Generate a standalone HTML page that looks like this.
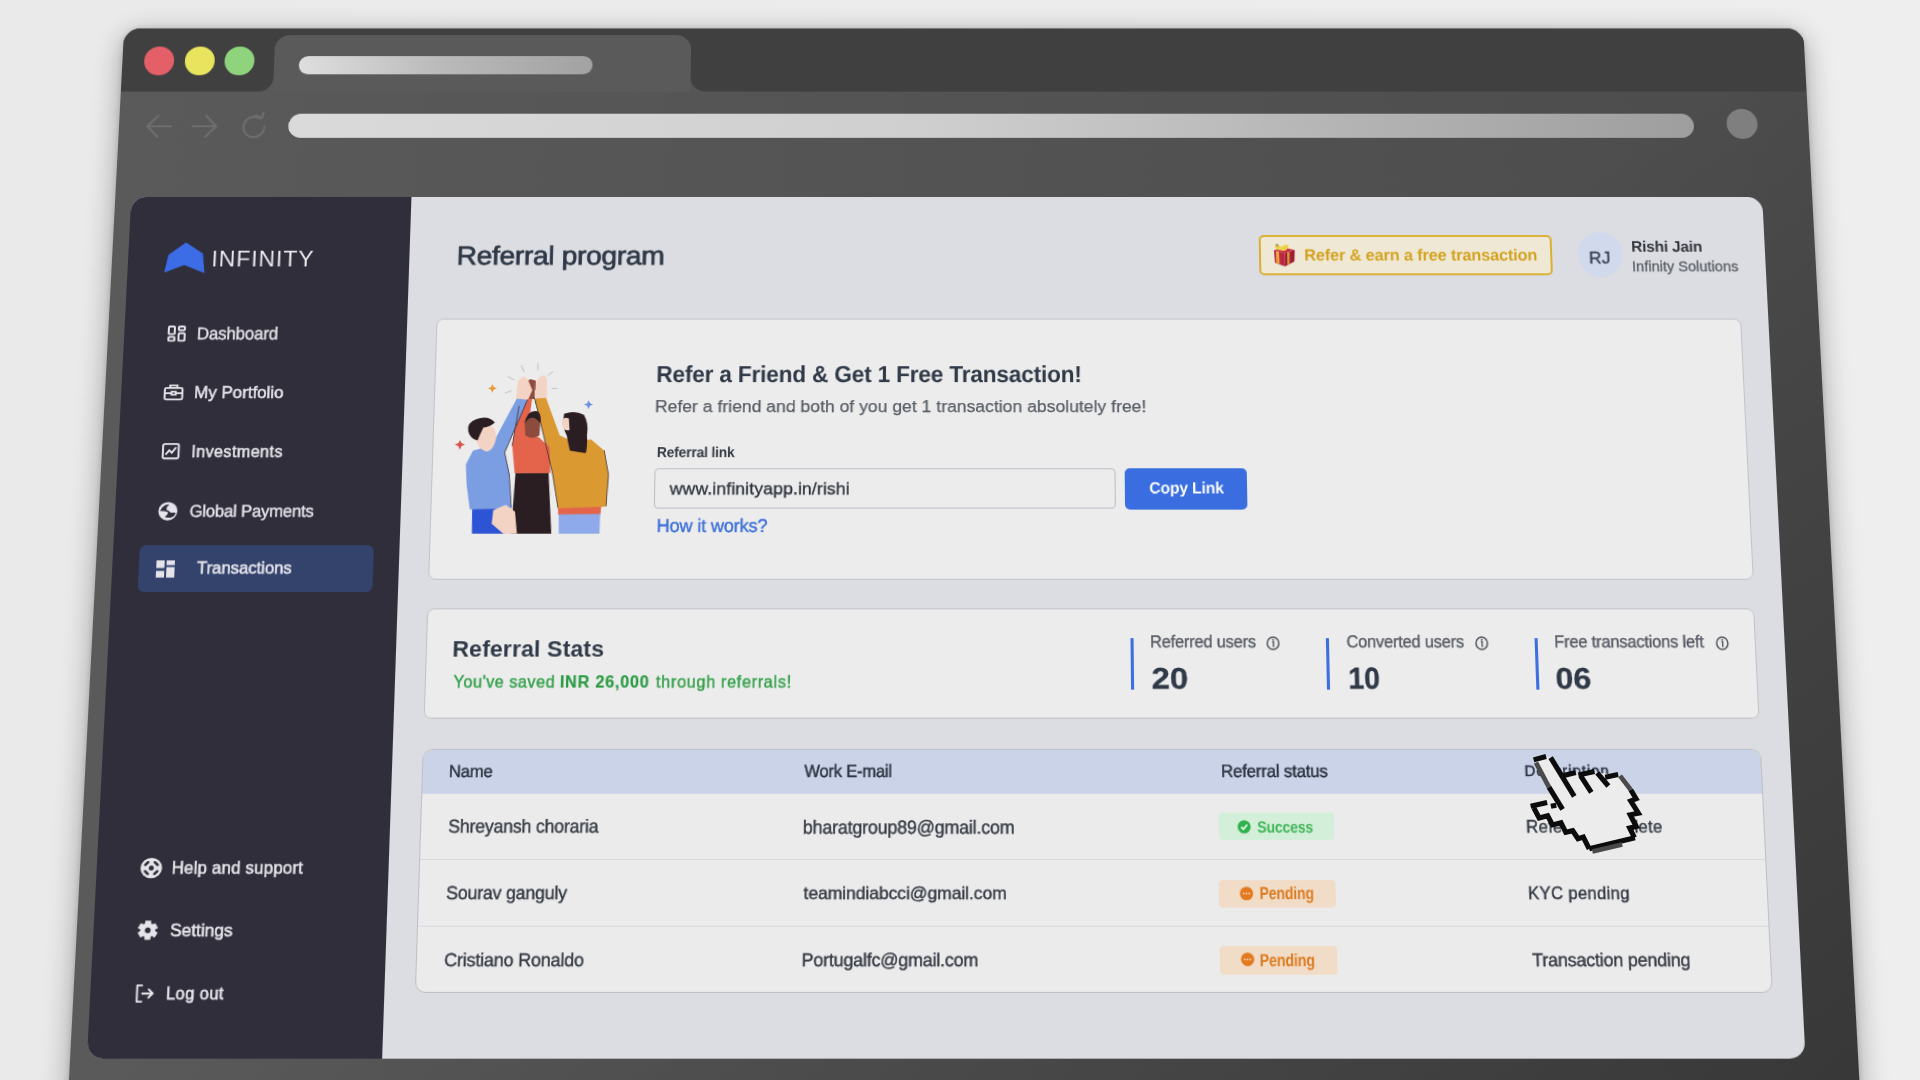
<!DOCTYPE html>
<html><head><meta charset="utf-8"><style>
html,body{margin:0;padding:0;width:1920px;height:1080px;overflow:hidden;background:#ebebeb;}
body{font-family:"Liberation Sans",sans-serif;position:relative;}
.t{position:absolute;white-space:nowrap;line-height:1;}
#plane{position:absolute;left:0;top:0;width:1900px;height:1200px;transform-origin:0 0;transform:matrix3d(0.9885413909,1.956405031e-12,0,-1.376688693e-14,-0.05743843265,0.9499752457,0,-6.00206411e-05,0,0,1,0,42.3574054,4.640137586,0,1);}
</style></head><body>
<div style="position:absolute;inset:0;background:linear-gradient(to right,#eaeaea,#eeeeee)"></div>
<div id="plane">
<div style="position:absolute;left:84.000px;top:25.000px;width:1696.000px;height:1080.000px;border-radius:17.000px 17.000px 0 0;background:linear-gradient(to right,#5a5a5a,#4c4c4c);box-shadow:0 6.000px 28.000px rgba(0,0,0,0.32), 0 0 6.000px rgba(0,0,0,0.15);overflow:hidden"><div style="position:absolute;inset:0;background:linear-gradient(to bottom right,transparent 50%,rgba(0,0,0,0.28) 100%)"></div></div>
<div style="position:absolute;left:84.000px;top:25.000px;width:1696.000px;height:20.000px;background:#404040;border-radius:17.000px 17.000px 0 0"></div>
<div style="position:absolute;left:84.000px;top:25.000px;width:153.000px;height:65.500px;background:#404040;border-radius:17.000px 0 15.000px 0"></div>
<div style="position:absolute;left:657.000px;top:25.000px;width:1123.000px;height:65.500px;background:#404040;border-radius:0 17.000px 0 15.000px"></div>
<div style="position:absolute;left:236.700px;top:32.000px;width:420.700px;height:59.000px;background:#5a5a5a;border-radius:15.000px 15.000px 0 0"></div>
<div style="position:absolute;left:106.000px;top:44.100px;width:30.000px;height:29.600px;background:#e45f67;border-radius:50%"></div>
<div style="position:absolute;left:146.500px;top:44.100px;width:30.000px;height:29.600px;background:#e9e45d;border-radius:50%"></div>
<div style="position:absolute;left:186.800px;top:44.100px;width:30.000px;height:29.600px;background:#8fd47d;border-radius:50%"></div>
<div style="position:absolute;left:262.000px;top:53.600px;width:296.000px;height:19.000px;border-radius:10.000px;background:linear-gradient(to right,#dedede,#b9b9b9 50%,#a2a2a2)"></div>
<div style="position:absolute;left:254.100px;top:113.800px;width:1410.500px;height:25.000px;border-radius:13.000px;background:linear-gradient(to right,#dadada,#cfcfcf 45%,#9e9e9e)"></div>
<div style="position:absolute;left:1698.000px;top:109.100px;width:31.000px;height:31.000px;background:#7f7f7f;border-radius:50%"></div>
<div style="position:absolute;left:108.000px;top:112.000px;width:130.000px;height:30.000px;"><svg viewBox="0 0 130 30" style="position:absolute;left:0;top:0;width:130.000px;height:30.000px" fill="none" stroke="#6e6e6e" stroke-width="2.2" stroke-linecap="round" stroke-linejoin="round"><path d="M5 15 H28 M15 4 L4.5 15 L15 26"/><path d="M50 15 H73 M63 4 L73.5 15 L63 26"/><path d="M122 15.5 A10.5 10.5 0 1 1 117 6.8 M113 4 L119 6.5 L120.5 1"/></svg></div>
<div style="position:absolute;left:100.000px;top:200.000px;width:1630.000px;height:840.000px;background:#dcdde2;border-radius:15.000px"></div>
<div style="position:absolute;left:100.000px;top:200.000px;width:280.000px;height:840.000px;background:#2f2e3a;border-radius:15.000px 0 0 15.000px"></div>
<svg style="position:absolute;left:135.120px;top:246.500px;width:41.580px;height:30.890px;overflow:visible;" viewBox="0 0 40 30" preserveAspectRatio="none"><path d="M21.2 0.3 L37.2 11 L39.4 29 L20.4 21.2 L2.2 28.7 L5.4 12.1 Z" fill="#3c6ce6" stroke="#3c6ce6" stroke-width="1.2" stroke-linejoin="round"/></svg>
<div style="position:absolute;left:126.080px;top:550.470px;width:228.740px;height:45.430px;background:#34436c;border-radius:6.000px"></div>
<svg style="position:absolute;left:142.840px;top:330.750px;width:17.920px;height:16.360px;overflow:visible;" viewBox="0 0 18 17" preserveAspectRatio="none"><g fill="none" stroke="#e4e4ea" stroke-width="2"><rect x="1" y="1" width="6" height="8" rx="1"/><rect x="11" y="1" width="6" height="4" rx="1"/><rect x="1" y="12" width="6" height="4" rx="1"/><rect x="11" y="8" width="6" height="8" rx="1"/></g></svg>
<svg style="position:absolute;left:142.040px;top:390.180px;width:19.440px;height:16.340px;overflow:visible;" viewBox="0 0 19 17" preserveAspectRatio="none"><g fill="none" stroke="#e4e4ea" stroke-width="1.9"><rect x="1" y="4" width="17" height="12" rx="1.5"/><path d="M6 4 V1.5 H13 V4"/><path d="M1 9.5 H18"/><rect x="7.5" y="8" width="4" height="3" fill="#2f2e3a"/></g></svg>
<svg style="position:absolute;left:143.290px;top:448.980px;width:17.500px;height:16.230px;overflow:visible;" viewBox="0 0 17 17" preserveAspectRatio="none"><g fill="none" stroke="#e4e4ea" stroke-width="1.9"><rect x="1" y="1" width="15" height="15" rx="1.5"/><path d="M3.5 12 L7 7.5 L9.5 10 L13.5 4.5"/></g></svg>
<svg style="position:absolute;left:142.050px;top:506.570px;width:19.440px;height:19.070px;overflow:visible;" viewBox="0 0 20 20" preserveAspectRatio="none"><circle cx="10" cy="10" r="9.6" fill="#e4e4ea"/><clipPath id="gc"><circle cx="10" cy="10" r="8.3"/></clipPath><path clip-path="url(#gc)" fill="#2f2e3a" d="M1 9.4 L2.4 9.2 L4.4 5.8 L7.6 3.5 L11.2 2.9 L8.8 5.8 L8.4 8.5 L11.2 10 L12.8 11.5 L16 11.5 L19 11.9 L16 15.4 L12.8 16.9 L8 16.5 L7.6 15.4 L9.6 13.5 L10.4 11.5 L8.8 10.4 L6.4 10 L1 9.8 Z"/></svg>
<svg style="position:absolute;left:143.110px;top:564.820px;width:18.000px;height:16.880px;overflow:visible;" viewBox="0 0 18 18" preserveAspectRatio="none"><g fill="#e4e4ea"><rect x="0" y="0" width="8" height="8"/><rect x="10" y="0" width="8" height="5"/><rect x="0" y="11" width="8" height="7"/><rect x="10" y="7" width="8" height="11"/></g></svg>
<svg style="position:absolute;left:142.070px;top:851.540px;width:20.710px;height:19.310px;overflow:visible;" viewBox="0 0 20 20" preserveAspectRatio="none"><circle cx="10" cy="10" r="10" fill="#e4e4ea"/><circle cx="10" cy="10" r="2.4" fill="#2f2e3a"/><g stroke="#2f2e3a" stroke-width="2.4" stroke-linecap="round"><path d="M4.3 6.9 L6.9 4.3 M13.1 4.3 L15.7 6.9 M4.3 13.1 L6.9 15.7 M15.7 13.1 L13.1 15.7"/></g></svg>
<svg style="position:absolute;left:142.340px;top:911.010px;width:19.740px;height:18.600px;overflow:visible;" viewBox="0 0 20 20" preserveAspectRatio="none"><path fill="#e4e4ea" fill-rule="evenodd" stroke="#e4e4ea" stroke-width="0.6" stroke-linejoin="round" d="M7.15 3.61 L7.49 0.63 L12.51 0.63 L12.85 3.61 L14.11 4.34 L16.86 3.14 L19.37 7.49 L16.96 9.27 L16.96 10.73 L19.37 12.51 L16.86 16.86 L14.11 15.66 L12.85 16.39 L12.51 19.37 L7.49 19.37 L7.15 16.39 L5.89 15.66 L3.14 16.86 L0.63 12.51 L3.04 10.73 L3.04 9.27 L0.63 7.49 L3.14 3.14 L5.89 4.34 Z M13.1 10 A3.1 3.1 0 1 0 6.9 10 A3.1 3.1 0 1 0 13.1 10 Z"/></svg>
<svg style="position:absolute;left:142.820px;top:970.590px;width:17.980px;height:16.970px;overflow:visible;" viewBox="0 0 18 18" preserveAspectRatio="none"><g fill="none" stroke="#e4e4ea" stroke-width="1.9" stroke-linecap="round" stroke-linejoin="round"><path d="M6 1 H1.5 V17 H6"/><path d="M6.5 9 H16.5 M12.5 5 L16.5 9 L12.5 13"/></g></svg>
<div style="position:absolute;left:1226.160px;top:239.040px;width:292.150px;height:41.200px;box-sizing:border-box;background:#efe8d5;border:2.000px solid #d8b035;border-radius:5.000px"></div>
<svg style="position:absolute;left:1232.290px;top:242.010px;width:39.140px;height:34.670px;overflow:visible;" viewBox="0 0 1271 1080" preserveAspectRatio="none"><path d="M290 390 L640 480 L640 900 L320 790 Z" fill="#bb2742"/><path d="M640 480 L965 385 L945 745 L640 900 Z" fill="#9d1d35"/><path d="M290 390 L600 300 L965 385 L640 480 Z" fill="#c8304a"/><path d="M350 410 L455 440 L470 835 L365 795 Z" fill="#eaa23c"/><path d="M715 460 L800 435 L790 820 L715 865 Z" fill="#d8952f"/><path d="M330 230 Q420 170 540 290 Q640 170 770 230 Q760 330 690 380 Q600 420 540 400 Q420 400 360 330 Q320 280 330 230 Z" fill="#ecd244"/><path d="M340 200 L420 180 L450 260 L360 270 Z" fill="#a8a060"/></svg>
<div style="position:absolute;left:1543.740px;top:236.280px;width:44.010px;height:46.100px;background:#d1d9ec;border-radius:50%"></div>
<div style="position:absolute;left:409.000px;top:324.000px;width:1293.500px;height:259.500px;box-sizing:border-box;background:#ececec;border:1.600px solid #c2c3c8;border-radius:7.000px"></div>
<svg style="position:absolute;left:423.470px;top:360.720px;width:172.020px;height:184.240px;overflow:visible;" viewBox="0 0 992 1080" preserveAspectRatio="none">
<g stroke="#c9c9c9" stroke-width="7" stroke-linecap="round" fill="none">
<path d="M338 128 L372 145"/><path d="M412 62 L428 96"/><path d="M505 48 L508 86"/><path d="M590 98 L565 118"/><path d="M325 222 L356 210"/><path d="M590 196 L618 196"/>
</g>
<path d="M250 170 L258 188 L276 195 L258 202 L250 222 L242 202 L224 195 L242 188 Z" fill="#e89a3a"/>
<path d="M800 265 L808 283 L826 290 L808 297 L800 317 L792 297 L774 290 L792 283 Z" fill="#6a8de0"/>
<path d="M75 498 L84 516 L104 525 L84 534 L75 555 L66 534 L46 525 L66 516 Z" fill="#d9534a"/>
<path d="M645 920 L880 920 L878 1042 L648 1042 Z" fill="#8eaaea"/>
<path d="M640 875 L885 870 L882 928 L642 930 Z" fill="#e3644b"/>
<path d="M492 250 L552 238 L640 470 L700 500 L820 495 L895 560 L922 700 L912 885 L640 895 L606 700 L572 560 Z" fill="#db9932"/>
<path d="M662 345 Q720 320 775 350 Q805 400 795 470 Q800 540 790 575 L700 560 Q690 520 680 470 Q650 420 662 345 Z" fill="#2b1e22"/>
<path d="M650 380 Q668 360 690 372 L695 440 Q670 445 655 425 Z" fill="#f3d3c3"/>
<path d="M492 255 L500 150 L520 128 L545 118 L560 140 L562 250 Z" fill="#f3d3c3"/>
<path d="M395 690 L582 688 L606 1042 L378 1042 Z" fill="#2b1e22"/>
<path d="M372 530 L415 250 L478 252 L455 470 L520 480 L585 540 L592 690 L390 692 Z" fill="#e3644b"/>
<path d="M438 390 Q485 320 528 390 L525 470 Q485 500 445 470 Z" fill="#8d4b3d"/>
<path d="M440 400 Q450 320 510 330 Q535 345 530 400 Q500 360 470 370 Q450 380 440 400 Z" fill="#2b1e22"/>
<path d="M425 255 L430 165 L465 140 L495 150 L492 258 Z" fill="#8d4b3d"/>
<path d="M155 890 L345 890 L342 1042 L158 1042 Z" fill="#2d54d4"/>
<path d="M150 560 L255 530 L398 240 L452 262 L330 570 L360 700 L376 895 L142 902 L120 760 L112 640 Z" fill="#7b9ee3"/>
<path d="M160 470 Q150 410 215 400 Q275 410 280 480 Q270 560 225 565 Q170 550 160 470 Z" fill="#f3d3c3"/>
<path d="M120 445 Q110 395 165 375 Q230 350 270 395 Q240 420 205 425 Q185 470 175 500 Q130 490 120 445 Z" fill="#2b1e22"/>
<path d="M385 255 L395 150 L425 125 L450 140 L478 205 L455 262 Z" fill="#f3d3c3"/>
<path d="M275 905 L345 875 L398 915 L412 1042 L335 1042 L268 985 Z" fill="#f3d3c3"/>
<g fill="none" stroke="#3a2a2c" stroke-width="5" stroke-linecap="round" opacity="0.85">
<path d="M452 262 L330 570 L360 700 L376 890"/>
<path d="M372 530 L405 300"/>
<path d="M492 250 L572 560 L606 700 L640 890"/>
<path d="M895 560 L922 700 L912 880"/>
</g>
</svg>
<div style="position:absolute;left:627.850px;top:474.150px;width:452.690px;height:39.730px;box-sizing:border-box;background:#ececec;border:1.500px solid #b9bdc6;border-radius:4.000px"></div>
<div style="position:absolute;left:1089.870px;top:473.650px;width:119.770px;height:41.120px;background:#3a6ee0;border-radius:5.000px"></div>
<div style="position:absolute;left:409.000px;top:612.400px;width:1293.000px;height:107.000px;box-sizing:border-box;background:#ececec;border:1.600px solid #c2c3c8;border-radius:7.000px"></div>
<div style="position:absolute;left:1094.000px;top:640.680px;width:2.800px;height:50.730px;background:#3d6fe0"></div>
<div style="position:absolute;left:1284.000px;top:640.680px;width:2.800px;height:50.730px;background:#3d6fe0"></div>
<div style="position:absolute;left:1487.000px;top:640.680px;width:2.800px;height:50.730px;background:#3d6fe0"></div>
<svg style="position:absolute;left:1226.230px;top:638.740px;width:13.150px;height:14.000px;overflow:visible;" viewBox="0 0 14 14" preserveAspectRatio="none"><circle cx="7" cy="7" r="6" fill="none" stroke="#55585e" stroke-width="1.6"/><path d="M6.2 5.6 H7.4 V10.8" fill="none" stroke="#55585e" stroke-width="1.5"/><circle cx="7.1" cy="3.7" r="0.9" fill="#55585e"/></svg>
<svg style="position:absolute;left:1429.160px;top:638.740px;width:12.970px;height:14.000px;overflow:visible;" viewBox="0 0 14 14" preserveAspectRatio="none"><circle cx="7" cy="7" r="6" fill="none" stroke="#55585e" stroke-width="1.6"/><path d="M6.2 5.6 H7.4 V10.8" fill="none" stroke="#55585e" stroke-width="1.5"/><circle cx="7.1" cy="3.7" r="0.9" fill="#55585e"/></svg>
<svg style="position:absolute;left:1663.310px;top:638.740px;width:12.770px;height:14.000px;overflow:visible;" viewBox="0 0 14 14" preserveAspectRatio="none"><circle cx="7" cy="7" r="6" fill="none" stroke="#55585e" stroke-width="1.6"/><path d="M6.2 5.6 H7.4 V10.8" fill="none" stroke="#55585e" stroke-width="1.5"/><circle cx="7.1" cy="3.7" r="0.9" fill="#55585e"/></svg>
<div style="position:absolute;left:409.000px;top:747.800px;width:1293.000px;height:230.900px;box-sizing:border-box;background:#ebebeb;border:1.600px solid #bfc0c6;border-radius:10.000px;overflow:hidden"><div style="position:absolute;left:0;top:0;right:0;height:41.800px;background:#cbd3e8"></div><div style="position:absolute;left:0;top:104.500px;right:0;height:1.200px;background:#d8d9dd"></div><div style="position:absolute;left:0;top:167.000px;right:0;height:1.200px;background:#d8d9dd"></div></div>
<div style="position:absolute;left:1176.550px;top:808.880px;width:111.920px;height:25.870px;background:#d3eed9;border-radius:4.000px"></div>
<div style="position:absolute;left:1176.110px;top:872.540px;width:111.740px;height:26.510px;background:#f1dcc7;border-radius:4.000px"></div>
<div style="position:absolute;left:1175.970px;top:935.330px;width:112.430px;height:26.580px;background:#f1dcc7;border-radius:4.000px"></div>
<svg style="position:absolute;left:1195.290px;top:816.020px;width:12.850px;height:13.030px;overflow:visible;" viewBox="0 0 14 14" preserveAspectRatio="none"><circle cx="7" cy="7" r="6.8" fill="#2fb14c"/><path d="M3.8 7.2 L6.1 9.4 L10.2 4.9" fill="none" stroke="#eafff0" stroke-width="1.8"/></svg>
<svg style="position:absolute;left:1196.240px;top:878.590px;width:13.080px;height:13.210px;overflow:visible;" viewBox="0 0 14 14" preserveAspectRatio="none"><circle cx="7" cy="7" r="6.8" fill="#e27a20"/><g fill="#f7dcc0"><circle cx="4.2" cy="7" r="0.9"/><circle cx="7" cy="7" r="0.9"/><circle cx="9.8" cy="7" r="0.9"/></g></svg>
<svg style="position:absolute;left:1196.020px;top:941.320px;width:13.030px;height:13.100px;overflow:visible;" viewBox="0 0 14 14" preserveAspectRatio="none"><circle cx="7" cy="7" r="6.8" fill="#e27a20"/><g fill="#f7dcc0"><circle cx="4.2" cy="7" r="0.9"/><circle cx="7" cy="7" r="0.9"/><circle cx="9.8" cy="7" r="0.9"/></g></svg>
<div class="t" style="left:182.950px;top:250.000px;line-height:26.000px;font-size:23.130px;font-weight:400;color:#ebebf0;letter-spacing:0.900px;transform:scaleX(0.9894);transform-origin:0 0;">INFINITY</div>
<div class="t" style="left:171.610px;top:329.000px;line-height:20.000px;font-size:17.630px;font-weight:400;color:#e4e4ea;letter-spacing:-0.200px;transform:scaleX(0.9528);transform-origin:0 0;-webkit-text-stroke:0.500px #e4e4ea">Dashboard</div>
<div class="t" style="left:171.930px;top:389.000px;line-height:19.000px;font-size:16.760px;font-weight:400;color:#e4e4ea;letter-spacing:0.001px;-webkit-text-stroke:0.500px #e4e4ea">My Portfolio</div>
<div class="t" style="left:171.940px;top:449.000px;line-height:17.000px;font-size:15.910px;font-weight:400;color:#e4e4ea;letter-spacing:0.393px;-webkit-text-stroke:0.500px #e4e4ea">Investments</div>
<div class="t" style="left:172.900px;top:507.000px;line-height:19.000px;font-size:16.650px;font-weight:400;color:#e4e4ea;letter-spacing:-0.200px;transform:scaleX(0.9829);transform-origin:0 0;-webkit-text-stroke:0.500px #e4e4ea">Global Payments</div>
<div class="t" style="left:182.870px;top:563.000px;line-height:18.000px;font-size:16.380px;font-weight:400;color:#e4e4ea;letter-spacing:-0.038px;-webkit-text-stroke:0.500px #e4e4ea">Transactions</div>
<div class="t" style="left:171.890px;top:852.000px;line-height:18.000px;font-size:16.170px;font-weight:400;color:#e4e4ea;letter-spacing:0.195px;-webkit-text-stroke:0.500px #e4e4ea">Help and support</div>
<div class="t" style="left:173.190px;top:911.000px;line-height:19.000px;font-size:16.590px;font-weight:400;color:#e4e4ea;letter-spacing:-0.003px;-webkit-text-stroke:0.500px #e4e4ea">Settings</div>
<div class="t" style="left:172.180px;top:971.000px;line-height:17.000px;font-size:15.640px;font-weight:400;color:#e4e4ea;letter-spacing:0.433px;-webkit-text-stroke:0.500px #e4e4ea">Log out</div>
<div class="t" style="left:427.320px;top:245.000px;line-height:30.000px;font-size:26.410px;font-weight:400;color:#2f3947;letter-spacing:-0.300px;transform:scaleX(1.0621);transform-origin:0 0;-webkit-text-stroke:0.750px #2f3947">Referral program</div>
<div class="t" style="left:1270.750px;top:250.000px;line-height:19.000px;font-size:16.630px;font-weight:700;color:#d3a21e;letter-spacing:-0.200px;transform:scaleX(0.9846);transform-origin:0 0;">Refer &amp; earn a free transaction</div>
<div class="t" style="left:1554.550px;top:252.000px;line-height:20.000px;font-size:17.210px;font-weight:400;color:#3a4255;letter-spacing:0.192px;-webkit-text-stroke:0.400px #3a4255">RJ</div>
<div class="t" style="left:1597.430px;top:242.000px;line-height:17.000px;font-size:15.460px;font-weight:700;color:#30343c;letter-spacing:-0.200px;transform:scaleX(0.9951);transform-origin:0 0;">Rishi Jain</div>
<div class="t" style="left:1597.090px;top:263.000px;line-height:16.000px;font-size:14.530px;font-weight:400;color:#5c6068;letter-spacing:-0.002px;-webkit-text-stroke:0.300px #5c6068">Infinity Solutions</div>
<div class="t" style="left:627.780px;top:367.000px;line-height:26.000px;font-size:23.380px;font-weight:700;color:#2f3947;letter-spacing:-0.200px;transform:scaleX(0.9582);transform-origin:0 0;">Refer a Friend &amp; Get 1 Free Transaction!</div>
<div class="t" style="left:627.280px;top:402.000px;line-height:20.000px;font-size:17.310px;font-weight:400;color:#585d66;letter-spacing:0.017px;-webkit-text-stroke:0.250px #585d66">Refer a friend and both of you get 1 transaction absolutely free!</div>
<div class="t" style="left:630.220px;top:450.000px;line-height:16.000px;font-size:14.460px;font-weight:700;color:#343a44;letter-spacing:-0.200px;transform:scaleX(0.9437);transform-origin:0 0;">Referral link</div>
<div class="t" style="left:643.230px;top:484.000px;line-height:20.000px;font-size:17.360px;font-weight:400;color:#2c323c;letter-spacing:0.092px;-webkit-text-stroke:0.300px #2c323c">www.infinityapp.in/rishi</div>
<div class="t" style="left:631.330px;top:521.000px;line-height:20.000px;font-size:18.190px;font-weight:400;color:#3b6fd9;letter-spacing:-0.200px;transform:scaleX(0.9812);transform-origin:0 0;-webkit-text-stroke:0.400px #3b6fd9">How it works?</div>
<div class="t" style="left:1113.590px;top:484.000px;line-height:18.000px;font-size:16.120px;font-weight:700;color:#ffffff;letter-spacing:-0.200px;transform:scaleX(0.9599);transform-origin:0 0;">Copy Link</div>
<div class="t" style="left:434.780px;top:639.000px;line-height:25.000px;font-size:22.420px;font-weight:700;color:#2f3947;letter-spacing:0.125px;">Referral Stats</div>
<div class="t" style="left:436.840px;top:675.000px;line-height:17.000px;font-size:15.720px;font-weight:400;color:#34a04a;letter-spacing:0.517px;-webkit-text-stroke:0.400px #34a04a">You've saved</div>
<div class="t" style="left:539.960px;top:675.000px;line-height:17.000px;font-size:15.720px;font-weight:700;color:#2a9b43;letter-spacing:0.755px;-webkit-text-stroke:0.200px #2a9b43">INR 26,000</div>
<div class="t" style="left:633.350px;top:675.000px;line-height:17.000px;font-size:15.720px;font-weight:400;color:#34a04a;letter-spacing:0.661px;-webkit-text-stroke:0.400px #34a04a">through referrals!</div>
<div class="t" style="left:1113.030px;top:635.000px;line-height:19.000px;font-size:16.790px;font-weight:400;color:#575b63;letter-spacing:-0.200px;transform:scaleX(0.9505);transform-origin:0 0;-webkit-text-stroke:0.400px #575b63">Referred users</div>
<div class="t" style="left:1113.770px;top:664.000px;line-height:32.000px;font-size:28.950px;font-weight:700;color:#2f3947;letter-spacing:0.000px;transform:scaleX(1.1058);transform-origin:0 0;-webkit-text-stroke:0.300px #2f3947">20</div>
<div class="t" style="left:1303.880px;top:635.000px;line-height:19.000px;font-size:16.790px;font-weight:400;color:#575b63;letter-spacing:-0.200px;transform:scaleX(0.9506);transform-origin:0 0;-webkit-text-stroke:0.400px #575b63">Converted users</div>
<div class="t" style="left:1305.210px;top:663.000px;line-height:33.000px;font-size:29.370px;font-weight:700;color:#2f3947;letter-spacing:0.000px;transform:scaleX(0.9366);transform-origin:0 0;-webkit-text-stroke:0.300px #2f3947">10</div>
<div class="t" style="left:1505.960px;top:635.000px;line-height:19.000px;font-size:16.790px;font-weight:400;color:#575b63;letter-spacing:-0.200px;transform:scaleX(0.9543);transform-origin:0 0;-webkit-text-stroke:0.400px #575b63">Free transactions left</div>
<div class="t" style="left:1506.060px;top:664.000px;line-height:32.000px;font-size:28.950px;font-weight:700;color:#2f3947;letter-spacing:0.000px;transform:scaleX(1.0755);transform-origin:0 0;-webkit-text-stroke:0.300px #2f3947">06</div>
<div class="t" style="left:434.980px;top:760.000px;line-height:18.000px;font-size:16.230px;font-weight:400;color:#2c3442;letter-spacing:-0.200px;transform:scaleX(0.9925);transform-origin:0 0;-webkit-text-stroke:0.450px #2c3442">Name</div>
<div class="t" style="left:778.150px;top:760.000px;line-height:19.000px;font-size:16.930px;font-weight:400;color:#2c3442;letter-spacing:-0.200px;transform:scaleX(0.9419);transform-origin:0 0;-webkit-text-stroke:0.450px #2c3442">Work E-mail</div>
<div class="t" style="left:1180.480px;top:760.000px;line-height:19.000px;font-size:16.930px;font-weight:400;color:#2c3442;letter-spacing:-0.200px;transform:scaleX(0.9607);transform-origin:0 0;-webkit-text-stroke:0.450px #2c3442">Referral status</div>
<div class="t" style="left:1472.790px;top:761.000px;line-height:16.000px;font-size:14.560px;font-weight:400;color:#2c3442;letter-spacing:0.847px;-webkit-text-stroke:0.450px #2c3442">Description</div>
<div class="t" style="left:435.930px;top:812.000px;line-height:20.000px;font-size:17.780px;font-weight:400;color:#363b45;letter-spacing:-0.200px;transform:scaleX(0.9595);transform-origin:0 0;-webkit-text-stroke:0.400px #363b45">Shreyansh choraria</div>
<div class="t" style="left:777.100px;top:813.000px;line-height:20.000px;font-size:17.930px;font-weight:400;color:#363b45;letter-spacing:-0.200px;transform:scaleX(0.9606);transform-origin:0 0;-webkit-text-stroke:0.400px #363b45">bharatgroup89@gmail.com</div>
<div class="t" style="left:1472.620px;top:813.000px;line-height:18.000px;font-size:16.120px;font-weight:400;color:#363b45;letter-spacing:0.227px;-webkit-text-stroke:0.400px #363b45">Referral complete</div>
<div class="t" style="left:436.060px;top:875.000px;line-height:20.000px;font-size:17.630px;font-weight:400;color:#363b45;letter-spacing:-0.200px;transform:scaleX(0.9664);transform-origin:0 0;-webkit-text-stroke:0.400px #363b45">Sourav ganguly</div>
<div class="t" style="left:778.360px;top:876.000px;line-height:19.000px;font-size:16.740px;font-weight:400;color:#363b45;letter-spacing:-0.048px;-webkit-text-stroke:0.400px #363b45">teamindiabcci@gmail.com</div>
<div class="t" style="left:1472.250px;top:877.000px;line-height:17.000px;font-size:15.980px;font-weight:400;color:#363b45;letter-spacing:0.299px;-webkit-text-stroke:0.400px #363b45">KYC pending</div>
<div class="t" style="left:435.740px;top:938.000px;line-height:20.000px;font-size:17.480px;font-weight:400;color:#363b45;letter-spacing:-0.200px;transform:scaleX(0.9836);transform-origin:0 0;-webkit-text-stroke:0.400px #363b45">Cristiano Ronaldo</div>
<div class="t" style="left:776.730px;top:938.000px;line-height:20.000px;font-size:17.480px;font-weight:400;color:#363b45;letter-spacing:-0.200px;transform:scaleX(0.9791);transform-origin:0 0;-webkit-text-stroke:0.400px #363b45">Portugalfc@gmail.com</div>
<div class="t" style="left:1473.860px;top:938.000px;line-height:20.000px;font-size:17.480px;font-weight:400;color:#363b45;letter-spacing:-0.200px;transform:scaleX(0.9801);transform-origin:0 0;-webkit-text-stroke:0.400px #363b45">Transaction pending</div>
<div class="t" style="left:1213.950px;top:814.000px;line-height:17.000px;font-size:15.420px;font-weight:700;color:#3db555;letter-spacing:-0.200px;transform:scaleX(0.8773);transform-origin:0 0;">Success</div>
<div class="t" style="left:1214.690px;top:876.000px;line-height:19.000px;font-size:16.660px;font-weight:700;color:#dc7b1f;letter-spacing:-0.200px;transform:scaleX(0.8094);transform-origin:0 0;">Pending</div>
<div class="t" style="left:1214.380px;top:939.000px;line-height:19.000px;font-size:16.520px;font-weight:700;color:#dc7b1f;letter-spacing:-0.200px;transform:scaleX(0.8252);transform-origin:0 0;">Pending</div>
</div>
<svg style="position:absolute;left:1520px;top:745px;width:130px;height:115px;overflow:visible" viewBox="0 0 1221 1080" preserveAspectRatio="none">
<path d="M150 140 L245 110 L300 125 L400 290 L520 260 L700 255 L920 285 L1070 500 L1035 530 L1110 640 L1035 655 L1095 765 L1030 780 L1070 875 L655 985 L595 870 L540 880 L485 800 L430 815 L375 735 L305 750 L255 665 L180 680 L120 580 L250 545 L290 575 L330 570 L380 605 Z" fill="#ececec"/>
<g fill="none" stroke="#0c0c0c" stroke-width="48" stroke-linejoin="miter" stroke-linecap="butt">
<path d="M128 140 L245 108"/>
<path d="M288 118 L510 482"/>
<path d="M272 395 L400 605"/>
<path d="M100 575 L255 540"/>
<path d="M290 575 L340 565"/>
<path d="M130 590 L180 685 L260 665 L305 750 L385 730 L430 820 L495 805 L545 880 L595 865 L650 975"/>
<path d="M650 975 L1080 872"/>
<path d="M402 288 L525 258"/>
<path d="M548 282 L700 250 M570 290 L670 445"/>
<path d="M725 262 L830 385 M800 302 L922 278"/>
<path d="M1040 420 L1090 505 L1040 525 L1112 640 L1035 655 L1092 765 L1030 780 L1075 870"/>
</g>
<g fill="none" stroke="#4a4a4a" stroke-width="44">
<path d="M150 165 L272 395"/>
<path d="M940 290 L1040 420"/>
<path d="M680 1000 L960 935"/>
</g>
</svg>
</body></html>
